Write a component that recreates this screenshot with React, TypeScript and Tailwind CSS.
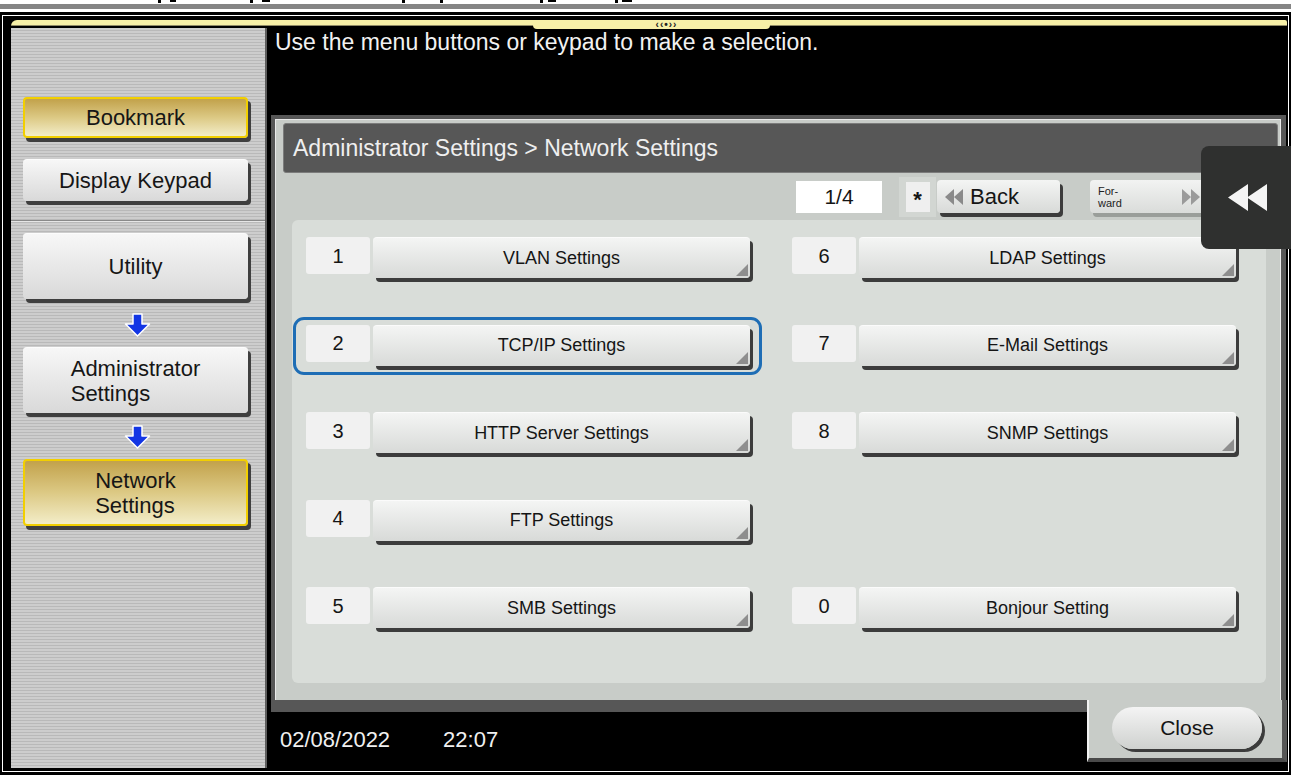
import React from "react";

const font = "font-['Liberation_Sans',Arial,sans-serif]";
const stripes =
  "bg-[repeating-linear-gradient(180deg,#cdcdcd_0px,#cdcdcd_2px,#b9b9b9_2px,#b9b9b9_3px)]";

function SideButton({
  children,
  yellow,
  className,
}: {
  children: React.ReactNode;
  yellow?: boolean;
  className: string;
}) {
  const face = yellow
    ? "bg-linear-to-b from-[#c2a24a] via-[#dcc984] to-[#f3edc8] border-2 border-[#f2cf00]"
    : "bg-linear-to-b from-[#f7f7f7] to-[#d9d9d9] border-t border-[#fcfcfc]";
  return (
    <div
      className={`w-[225px] rounded-[4px] shadow-[3px_4px_0_#3f3f3f] flex items-center justify-center text-[22px] leading-[25px] text-[#161616] ${face} ${className}`}
    >
      {children}
    </div>
  );
}

function DownArrow() {
  return (
    <svg width="27" height="24" viewBox="0 0 27 24">
      <path
        d="M9 1h9v10h7.5L13.5 23 1.5 11H9z"
        fill="#1336e4"
        stroke="#ffffff"
        strokeWidth="1.5"
        strokeLinejoin="round"
      />
    </svg>
  );
}

function MenuRow({
  num,
  label,
  active,
}: {
  num: string;
  label: string;
  active?: boolean;
}) {
  return (
    <div className="relative flex items-start gap-[3px] h-[44px]">
      {active && (
        <div className="absolute -left-[13px] -top-[8px] -right-[9px] -bottom-[6px] border-[3px] border-[#1e6db5] rounded-[11px]" />
      )}
      <div className="w-[64px] h-[37px] rounded-[3px] bg-[#f1f1f1] flex items-center justify-center text-[20px] text-[#151515]">
        {num}
      </div>
      <div className="relative w-[377px] h-[41px] rounded-[4px] bg-linear-to-b from-[#f4f5f4] to-[#d8dad8] border-t border-[#fbfbfb] shadow-[3px_4px_0_#3c3c3c] flex items-center justify-center text-[18px] text-[#151515]">
        {label}
        <svg
          className="absolute right-[2px] bottom-[2px]"
          width="12"
          height="12"
          viewBox="0 0 12 12"
        >
          <path d="M12 0V12H0z" fill="#8e8e8e" />
        </svg>
      </div>
    </div>
  );
}

function Empty() {
  return <div className="h-[44px]" />;
}

export default function App() {
  return (
    <div className={`relative w-[1291px] h-[775px] bg-white overflow-hidden ${font}`}>
      {/* clipped bits of text above the screen */}
      <div className="relative h-[4px] bg-white">
        <div className="absolute left-[158px] top-0 w-[3px] h-[3px] bg-black" />
        <div className="absolute left-[170px] top-0 w-[6px] h-[2px] bg-black" />
        <div className="absolute left-[250px] top-0 w-[3px] h-[3px] bg-black" />
        <div className="absolute left-[262px] top-0 w-[8px] h-[2px] bg-black" />
        <div className="absolute left-[402px] top-0 w-[3px] h-[3px] bg-black" />
        <div className="absolute left-[440px] top-0 w-[3px] h-[3px] bg-black" />
        <div className="absolute left-[540px] top-0 w-[3px] h-[3px] bg-black" />
        <div className="absolute left-[548px] top-0 w-[8px] h-[2px] bg-black" />
        <div className="absolute left-[615px] top-0 w-[3px] h-[3px] bg-black" />
        <div className="absolute left-[622px] top-0 w-[10px] h-[2px] bg-black" />
      </div>
      <div className="h-[5px] bg-[#858585]" />
      <div className="h-[3px] bg-white" />

      <div className="h-[763px] bg-black px-[2px] py-[3px]">
        <div className="h-full border border-white bg-black pt-[4px] pl-[8px] flex flex-col">
          {/* yellow strip */}
          <div className="relative h-[8px] mr-[1px]">
            <div className="h-[6px] bg-[#f7f0a8] rounded-tl-[6px] rounded-tr-[2px] border-b border-[#8f8a66]" />
            <div className="absolute left-[522px] top-0 w-[237px] h-[9px] bg-[#f7f0a8] rounded-bl-[4px] rounded-br-[4px] flex items-center justify-center">
              <span className="text-[10px] leading-[9px] font-bold text-[#222] tracking-[1px] -mt-[1px] ml-[30px]">
                ‹‹•››
              </span>
            </div>
          </div>

          <div className="flex h-[740px]">
            {/* sidebar */}
            <div className={`w-[256px] h-full border-r-2 border-[#5e5e5e] ${stripes} flex flex-col`}>
              <div className="h-[192px] pl-[12px] pt-[69px] flex flex-col">
                <SideButton yellow className="h-[41px]">
                  Bookmark
                </SideButton>
                <SideButton className="h-[42px] mt-[21px]">Display Keypad</SideButton>
              </div>
              <div className="h-[2px] bg-[#8a8a8a] border-b border-[#e6e6e6]" />
              <div className="pl-[12px] pt-[11px] flex flex-col">
                <SideButton className="h-[66px]">Utility</SideButton>
                <div className="w-[228px] flex justify-center mt-[14px]">
                  <DownArrow />
                </div>
                <SideButton className="h-[66px] mt-[10px]">
                  <span className="text-left">
                    Administrator
                    <br />
                    Settings
                  </span>
                </SideButton>
                <div className="w-[228px] flex justify-center mt-[12px]">
                  <DownArrow />
                </div>
                <SideButton yellow className="h-[67px] mt-[10px]">
                  <span className="text-left">
                    Network
                    <br />
                    Settings
                  </span>
                </SideButton>
              </div>
            </div>

            {/* main column */}
            <div className="w-[1021px] h-full flex flex-col">
              <div className="h-[87px] pl-[8px] pt-[1px] text-[23px] leading-[26px] text-[#f2f2f2]">
                Use the menu buttons or keypad to make a selection.
              </div>

              {/* panel */}
              <div className="ml-[4px] w-[1015px] bg-[#575757] pt-[4px] pl-[4px] pr-[5px] pb-[12px]">
                <div className="bg-[#c8ccc8] border-t border-l border-r border-[#eaeaea] flex flex-col">
                  <div className="mt-[3px] ml-[7px] mr-[2px] h-[50px] rounded-[3px] bg-[#575757] border border-[#7c7c7c] flex items-center pl-[9px] text-[23px] text-[#efefef]">
                    Administrator Settings &gt; Network Settings
                  </div>

                  {/* pager */}
                  <div className="h-[47px] flex items-center justify-end pr-[66px]">
                    <div className="w-[86px] h-[32px] bg-white flex items-center justify-center text-[21px] text-[#151515]">
                      1/4
                    </div>
                    <div className="ml-[17px] w-[37px] h-[40px] bg-[#d2d6d2] flex items-center justify-center">
                      <div className="w-[24px] h-[30px] bg-[#efefef] flex items-center justify-center text-[22px] font-bold text-[#151515] pt-[6px]">
                        *
                      </div>
                    </div>
                    <div className="ml-[1px] w-[123px] h-[33px] rounded-[4px] bg-linear-to-b from-[#f4f5f4] to-[#d8dad8] shadow-[3px_4px_0_#3c3c3c] flex items-center pl-[8px] gap-[6px] text-[22px] text-[#151515]">
                      <svg width="19" height="16" viewBox="0 0 19 16">
                        <path d="M0 8 9 0v16zM9 8l9-8v16z" fill="#8a8a8a" />
                      </svg>
                      Back
                    </div>
                    <div className="ml-[30px] w-[124px] h-[33px] rounded-[4px] bg-linear-to-b from-[#f2f3f2] to-[#dadcda] shadow-[3px_4px_0_#9a9e9a] flex items-center pl-[8px] pr-[14px] justify-between">
                      <span className="text-[11px] leading-[12px] text-[#222]">
                        For-
                        <br />
                        ward
                      </span>
                      <svg width="19" height="16" viewBox="0 0 19 16">
                        <path d="M19 8 10 0v16zM10 8 1 0v16z" fill="#9a9a9a" />
                      </svg>
                    </div>
                  </div>

                  {/* list */}
                  <div className="ml-[16px] mr-[14px] h-[463px] rounded-[6px] bg-[#d9ddd9] pl-[14px] pt-[17px]">
                    <div className="grid grid-cols-[447px_447px] gap-x-[39px] gap-y-[43.5px]">
                      <MenuRow num="1" label="VLAN Settings" />
                      <MenuRow num="6" label="LDAP Settings" />
                      <MenuRow num="2" label="TCP/IP Settings" active />
                      <MenuRow num="7" label="E-Mail Settings" />
                      <MenuRow num="3" label="HTTP Server Settings" />
                      <MenuRow num="8" label="SNMP Settings" />
                      <MenuRow num="4" label="FTP Settings" />
                      <Empty />
                      <MenuRow num="5" label="SMB Settings" />
                      <MenuRow num="0" label="Bonjour Setting" />
                    </div>
                  </div>
                  <div className="h-[17px]" />
                </div>
              </div>

              {/* status bar */}
              <div className="flex-1 flex items-start pt-[15px] pl-[13px] gap-[53px] text-[22px] leading-[25px] text-[#f0f0f0]">
                <span>02/08/2022</span>
                <span>22:07</span>
              </div>
            </div>
          </div>
        </div>
      </div>

      {/* panel tab holding the Close button */}
      <div className="absolute left-[1087px] top-[700px] w-[200px] h-[62px] bg-[#c8ccc8] border-l-2 border-[#f2f2f2] border-r-[5px] border-r-[#575757] border-b-[4px] border-b-[#4a4a4a] pl-[23px] pt-[7px]">
        <div className="w-[150px] h-[42px] rounded-full bg-linear-to-b from-[#f4f4f4] to-[#cfd1cf] shadow-[3px_3px_0_#3c3c3c] flex items-center justify-center text-[21px] text-[#151515]">
          Close
        </div>
      </div>

      {/* collapse tab */}
      <div className="absolute left-[1201px] top-[146px] w-[90px] h-[103px] bg-[#2f302f] rounded-l-[8px] flex items-center pl-[27px]">
        <svg width="40" height="27" viewBox="0 0 40 27">
          <path d="M0 13.5 20 0v27zM19 13.5 39 0v27z" fill="#f4f4f4" />
        </svg>
      </div>
    </div>
  );
}
